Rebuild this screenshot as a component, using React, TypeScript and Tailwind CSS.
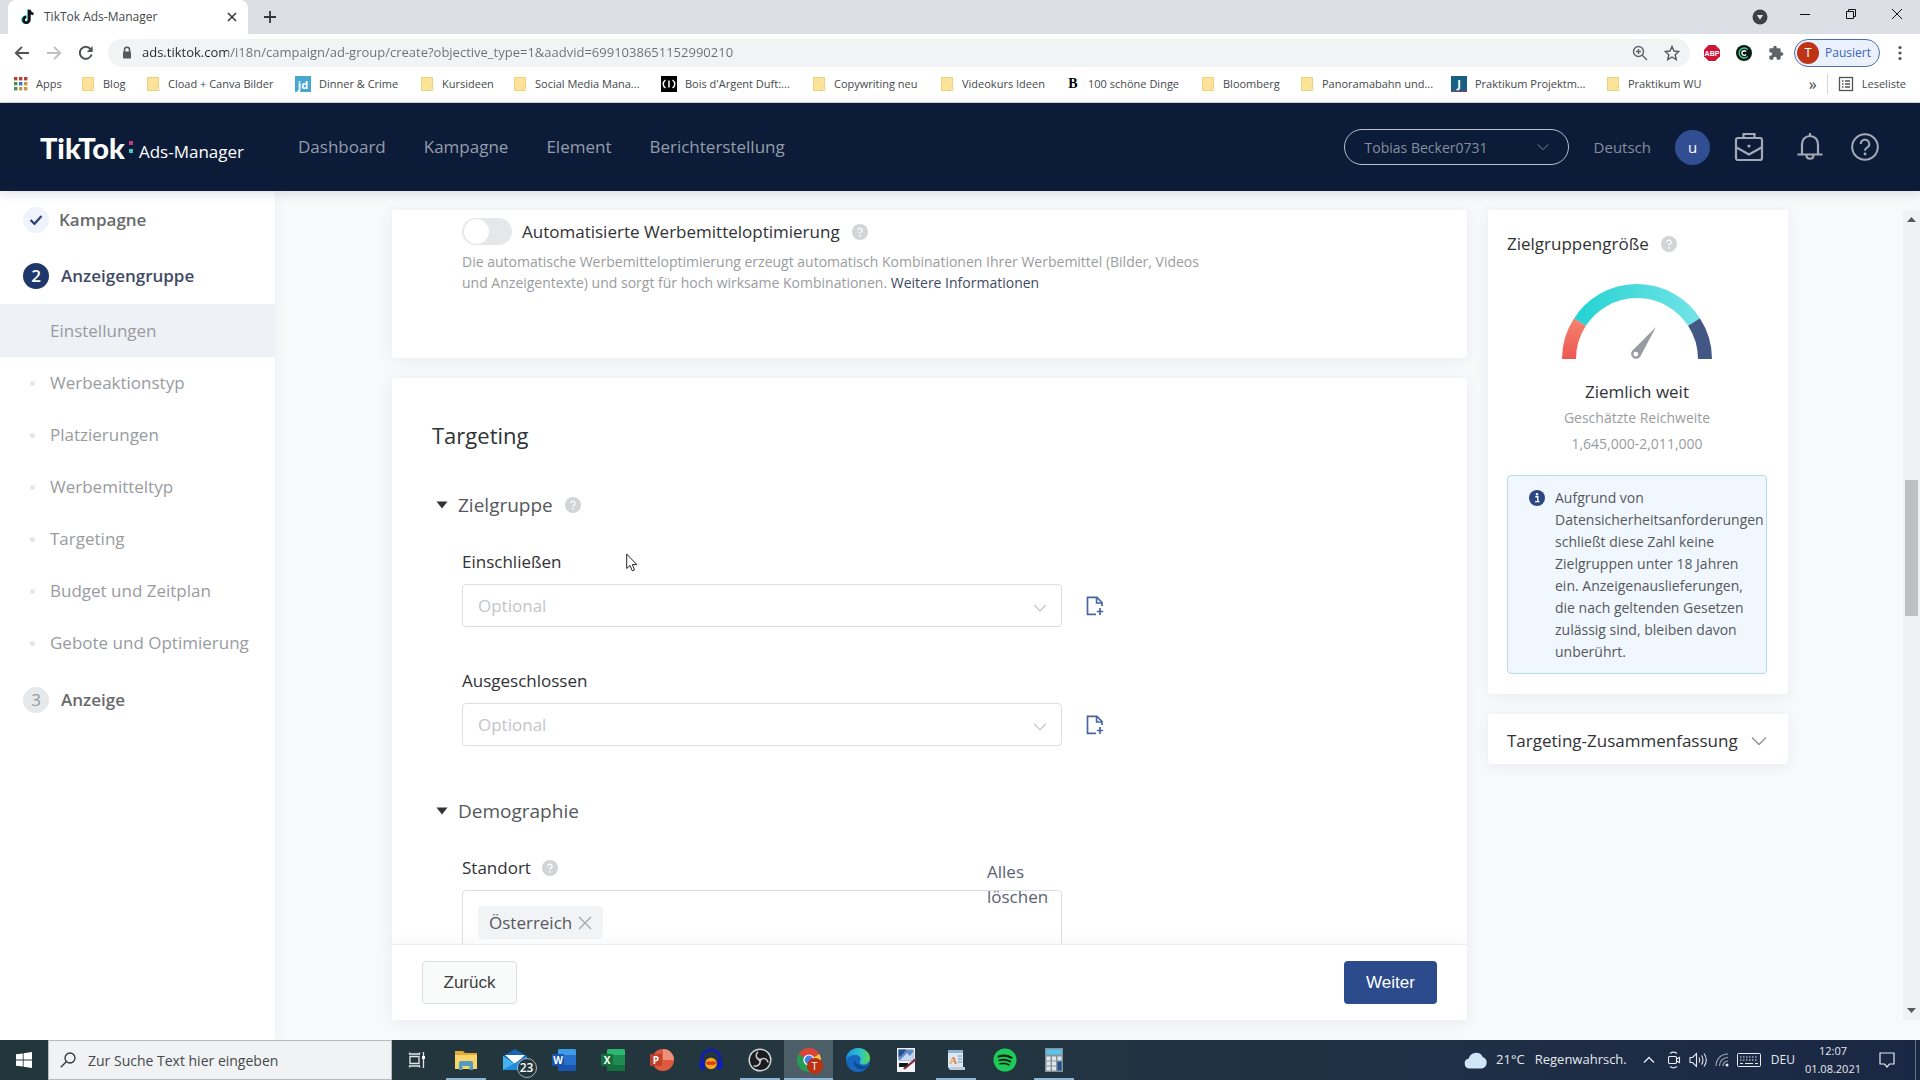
import React from 'react';
import type { ReactNode } from 'react';

/* ---------- shared icons ---------- */

function HelpDot() {
  return (
    <svg viewBox="0 0 16 16" className="size-4 shrink-0" aria-hidden="true">
      <circle cx="8" cy="8" r="8" fill="#d3d4d6" />
      <path d="M5.9 6.3a2.1 2.1 0 1 1 3 1.9c-.6.3-.9.7-.9 1.4" fill="none" stroke="#fff" strokeWidth="1.3" />
      <circle cx="8" cy="11.9" r=".9" fill="#fff" />
    </svg>
  );
}

function Chevron({ className }: { className: string }) {
  return (
    <svg viewBox="0 0 16 10" className={className} fill="none" stroke="currentColor" strokeWidth="1.3" aria-hidden="true">
      <path d="M1 1.5l7 7 7-7" />
    </svg>
  );
}

function FileAdd() {
  return (
    <svg viewBox="0 0 18 20" className="h-5 w-[18px]" fill="none" stroke="#4a65a3" strokeWidth="1.7" aria-hidden="true">
      <path d="M16 10V6.5L11 1.3H1.5v17H10" />
      <path d="M10.6 1.5V7H16" />
      <path d="M14 12v7M10.8 15.5h6.4" />
    </svg>
  );
}

/* ---------- browser chrome ---------- */

function Folder() {
  return (
    <svg viewBox="0 0 14 14" className="size-3.5" aria-hidden="true">
      <path d="M1.5.5h11v13h-11z" fill="#fbe49a" stroke="#ecd27c" />
      <path d="M10.5 10h2.5v3.5h-3z" fill="#fdf0bd" stroke="#e4c766" strokeWidth=".6" />
    </svg>
  );
}

function AppsGrid() {
  const colors = ['#b3403a', '#b3403a', '#b3403a', '#4a8f5a', '#3b72c4', '#c79a3c', '#4a8f5a', '#c79a3c', '#c79a3c'];
  return (
    <svg viewBox="0 0 14 14" className="size-3.5" aria-hidden="true">
      {colors.map((c, i) => (
        <rect key={i} x={(i % 3) * 5} y={Math.floor(i / 3) * 5} width="3.4" height="3.4" fill={c} />
      ))}
    </svg>
  );
}

const bookmarks: { label: string; cell: string; icon: ReactNode }[] = [
  { label: 'Apps', cell: 'w-[67px]', icon: <AppsGrid /> },
  { label: 'Blog', cell: 'w-[65px]', icon: <Folder /> },
  { label: 'Cload + Canva Bilder', cell: 'w-[149px]', icon: <Folder /> },
  {
    label: 'Dinner & Crime',
    cell: 'w-[125px]',
    icon: <span className="flex size-4 items-center justify-center bg-[#46a7cf] text-[11px] leading-none font-bold text-white">jd</span>,
  },
  { label: 'Kursideen', cell: 'w-[93px]', icon: <Folder /> },
  { label: 'Social Media Mana...', cell: 'w-[148px]', icon: <Folder /> },
  {
    label: "Bois d'Argent Duft:...",
    cell: 'w-[151px]',
    icon: (
      <svg viewBox="0 0 16 16" className="size-4" aria-hidden="true">
        <rect width="16" height="16" fill="#000" />
        <path d="M4.5 4C1.5 6 1.5 10 4.500 12M11.500 4c3 2 3 6 0 8" fill="none" stroke="#fff" strokeWidth="1.500" />
        <path d="M8 4.500v7" stroke="#fff" strokeWidth="1.500" />
      </svg>
    ),
  },
  { label: 'Copywriting neu', cell: 'w-[128px]', icon: <Folder /> },
  { label: 'Videokurs Ideen', cell: 'w-[126px]', icon: <Folder /> },
  {
    label: '100 schöne Dinge',
    cell: 'w-[135px]',
    icon: <span className="w-3.5 text-center font-['Liberation_Serif',serif] text-[14px] leading-none font-black text-black">B</span>,
  },
  { label: 'Bloomberg', cell: 'w-[99px]', icon: <Folder /> },
  { label: 'Panoramabahn und...', cell: 'w-[151px]', icon: <Folder /> },
  {
    label: 'Praktikum Projektm...',
    cell: 'w-[155px]',
    icon: <span className="flex size-4 items-center justify-center border-b-2 border-[#5a4a86] bg-[#17607f] text-[11px] leading-none font-bold text-white">J</span>,
  },
  { label: 'Praktikum WU', cell: 'w-[120px]', icon: <Folder /> },
];

function BrowserChrome() {
  return (
    <div className="shrink-0 bg-white text-[#45484c]">
      {/* tab strip */}
      <div className="flex h-[34px] items-start bg-[#dcdfe6]">
        <div className="ml-2 flex h-[34px] w-60 items-center rounded-t-lg bg-white pr-2 pl-3">
          <svg viewBox="0 0 16 18" className="mr-2 h-[18px] w-4" aria-hidden="true">
            <path d="M8.300 1.500v10.300a2.900 2.900 0 1 1-2.900-2.900" fill="none" stroke="#2fd8d8" strokeWidth="2.600" />
            <path d="M9.300 1.800v10a2.900 2.900 0 1 1-2.900-2.900M9.300 1.800c.3 2.500 2 3.900 4.200 4" fill="none" stroke="#111" strokeWidth="2.800" />
          </svg>
          <span className="flex-1 text-[12px]">TikTok Ads-Manager</span>
          <button aria-label="Tab schließen" className="flex size-4 items-center justify-center">
            <svg viewBox="0 0 10 10" className="size-2.5" stroke="#33363a" strokeWidth="1.500" aria-hidden="true"><path d="M1 1l8 8M9 1L1 9" /></svg>
          </button>
        </div>
        <button aria-label="Neuer Tab" className="ml-3.5 flex h-[34px] w-4 items-center justify-center">
          <svg viewBox="0 0 14 14" className="size-3.5" stroke="#33363a" strokeWidth="1.800" aria-hidden="true"><path d="M7 1v12M1 7h12" /></svg>
        </button>
        <div className="flex-1" />
        <button aria-label="Tabs durchsuchen" className="mr-3.5 flex h-[34px] w-4 items-center justify-center">
          <svg viewBox="0 0 16 16" className="size-4" aria-hidden="true"><circle cx="8" cy="8" r="7.500" fill="#3d4044" /><path d="M4.800 6h6.400L8 10.800z" fill="#dcdfe6" /></svg>
        </button>
        <button aria-label="Minimieren" className="flex h-7 w-[46px] items-center justify-center">
          <svg viewBox="0 0 12 12" className="size-3" stroke="#111" aria-hidden="true"><path d="M1 6.500h10" /></svg>
        </button>
        <button aria-label="Verkleinern" className="flex h-7 w-[46px] items-center justify-center">
          <svg viewBox="0 0 12 12" className="size-3" fill="none" stroke="#111" aria-hidden="true"><path d="M1.500 3.500h7v7h-7zM3.500 3.500v-2h7v7h-2" /></svg>
        </button>
        <button aria-label="Schließen" className="flex h-7 w-[46px] items-center justify-center">
          <svg viewBox="0 0 12 12" className="size-3" stroke="#111" aria-hidden="true"><path d="M1 1l10 10M11 1L1 11" /></svg>
        </button>
      </div>

      {/* address row */}
      <div className="flex h-[34px] items-center pt-1">
        <div className="flex w-[108px] items-center gap-4 pl-3.5">
          <button aria-label="Zurück">
            <svg viewBox="0 0 16 16" className="size-4" fill="none" stroke="#505356" strokeWidth="1.900" aria-hidden="true"><path d="M15 8H2M8 1.800L1.800 8 8 14.200" /></svg>
          </button>
          <button aria-label="Vorwärts">
            <svg viewBox="0 0 16 16" className="size-4" fill="none" stroke="#bfc1c4" strokeWidth="1.900" aria-hidden="true"><path d="M1 8h13M8 1.800L14.200 8 8 14.200" /></svg>
          </button>
          <button aria-label="Neu laden">
            <svg viewBox="0 0 16 16" className="size-4" fill="none" stroke="#505356" strokeWidth="2" aria-hidden="true"><path d="M13.600 9.500A6 6 0 1 1 12.500 4" /><path d="M14.700 1v6H8.800z" fill="#505356" stroke="none" /></svg>
          </button>
        </div>
        <div className="flex h-7 flex-1 items-center rounded-full bg-[#f1f3f4] pr-2.5 pl-3.5">
          <svg viewBox="0 0 10 14" className="h-3.5 w-2.5" aria-hidden="true"><path d="M2.500 6V3.700a2.500 2.500 0 0 1 5 0V6" fill="none" stroke="#55585c" strokeWidth="1.500" /><rect x="1" y="5.500" width="8" height="7" rx=".8" fill="#55585c" /></svg>
          <input
            aria-label="Adresse"
            readOnly
            value="ads.tiktok.com/i18n/campaign/ad-group/create?objective_type=1&aadvid=6991038651152990210"
            className="ml-2.5 min-w-0 flex-1 bg-[linear-gradient(90deg,#25282c_86px,#6b6f74_86px)] bg-clip-text text-[13px] text-transparent outline-none"
          />
          <button aria-label="Zoom" className="mr-4">
            <svg viewBox="0 0 16 16" className="size-4" fill="none" stroke="#5f6368" strokeWidth="1.400" aria-hidden="true"><circle cx="6.500" cy="6.500" r="5" /><path d="M10.300 10.300l4.700 4.700M6.500 4v5M4 6.500h5" /></svg>
          </button>
          <button aria-label="Lesezeichen">
            <svg viewBox="0 0 16 16" className="size-4" fill="none" stroke="#55585c" strokeWidth="1.400" aria-hidden="true"><path d="M8 1.500l2 4.500 4.800.5-3.600 3.200 1 4.800L8 12l-4.200 2.500 1-4.800L1.200 6.500 6 6z" /></svg>
          </button>
        </div>
        <div className="flex items-center gap-4 pl-3.5">
          <svg viewBox="0 0 16 16" className="size-4" role="img" aria-label="ABP">
            <path d="M4.700 0h6.600L16 4.700v6.600L11.300 16H4.700L0 11.300V4.700z" fill="#cf1438" />
            <text x="8" y="10.700" textAnchor="middle" fontSize="7" fontWeight="700" fill="#fff" fontFamily="Liberation Sans, sans-serif">ABP</text>
          </svg>
          <svg viewBox="0 0 16 16" className="size-4" aria-hidden="true"><circle cx="8" cy="8" r="8" fill="#0b1a14" /><path d="M11.800 4.600a5 5 0 1 0 0 6.800" fill="none" stroke="#3ed896" strokeWidth="1.300" /><path d="M10 6.600a2.300 2.300 0 1 0 0 2.900" fill="none" stroke="#fff" strokeWidth="1.400" /></svg>
          <svg viewBox="0 0 24 24" className="size-4" fill="#5f6368" aria-hidden="true"><path d="M20.500 11H19V7a2 2 0 0 0-2-2h-4V3.500a2.500 2.500 0 0 0-5 0V5H4a2 2 0 0 0-2 2v3.800h1.500a2.700 2.700 0 0 1 0 5.400H2V20a2 2 0 0 0 2 2h3.800v-1.500a2.700 2.700 0 0 1 5.400 0V22H17a2 2 0 0 0 2-2v-4h1.500a2.500 2.500 0 0 0 0-5z" /></svg>
        </div>
        <button className="ml-2.5 flex h-7 items-center gap-1.5 rounded-full border border-[#4a6fae] bg-[#eaf1fd] pr-2 pl-0.5 text-[12px] text-[#3d62b8]">
          <span className="flex size-[22px] items-center justify-center rounded-full bg-[#bd3516] text-[13px] text-white">T</span>
          Pausiert
        </button>
        <button aria-label="Menü" className="flex w-10 justify-center">
          <svg viewBox="0 0 4 16" className="h-4 w-1" fill="#505356" aria-hidden="true"><circle cx="2" cy="2.500" r="1.600" /><circle cx="2" cy="8" r="1.600" /><circle cx="2" cy="13.500" r="1.600" /></svg>
        </button>
      </div>

      {/* bookmarks */}
      <div className="flex h-[35px] items-center border-b border-[#d8dade] pb-0.5 pl-3.5 text-[11px]">
        {bookmarks.map((b) => (
          <a key={b.label} href="#" className={`flex shrink-0 items-center gap-2 whitespace-nowrap ${b.cell}`}>
            {b.icon}
            {b.label}
          </a>
        ))}
        <div className="flex-1" />
        <button aria-label="Weitere Lesezeichen" className="text-[16px] leading-none">»</button>
        <div className="ml-2.5 h-5 w-px bg-[#d4d6d9]" />
        <button className="mr-3.5 ml-2.5 flex items-center gap-2">
          <svg viewBox="0 0 16 16" className="size-4" fill="none" stroke="#505356" strokeWidth="1.300" aria-hidden="true"><rect x="1.500" y="1.500" width="13" height="13" /><path d="M4 5h1.500M7 5h5M4 8h1.500M7 8h5M4 11h1.500M7 11h5" /></svg>
          Leseliste
        </button>
      </div>
    </div>
  );
}

/* ---------- app header ---------- */

function AppHeader() {
  return (
    <header className="relative z-10 flex h-[88px] shrink-0 items-center bg-[#0c1c38] px-10 text-[#949cab] shadow-[0_2px_10px_rgba(40,50,100,0.16)]">
      <a href="#" className="flex w-[258px] items-center text-white">
        <span className="font-['Lato',sans-serif] text-[29px] leading-none font-black">TikTok</span>
        <span className="mr-1.5 ml-1 flex flex-col gap-1">
          <span className="size-1 bg-[#c23a7c]" />
          <span className="size-1 bg-[#3fc7c9]" />
        </span>
        <span className="pt-2 text-[17px] leading-none">Ads-Manager</span>
      </a>
      <nav className="flex gap-[38px] text-[17px] font-medium">
        <a href="#">Dashboard</a>
        <a href="#">Kampagne</a>
        <a href="#">Element</a>
        <a href="#">Berichterstellung</a>
      </nav>
      <div className="flex-1" />
      <button className="flex h-9 w-[225px] items-center justify-between rounded-full border border-[#b9c0cc] pr-[19px] pl-5 text-[14px] text-[#858e9e]">
        Tobias Becker0731
        <Chevron className="h-2 w-3" />
      </button>
      <button className="ml-[25px] text-[15px] text-[#858e9e]">Deutsch</button>
      <button className="ml-6 flex size-[35px] items-center justify-center rounded-full bg-[#324e92] text-[15px] text-white">u</button>
      <button aria-label="Business" className="ml-6">
        <svg viewBox="0 0 30 30" className="size-[30px]" fill="none" stroke="#a3a9b5" strokeWidth="2.200" aria-hidden="true">
          <rect x="2" y="6" width="26" height="22" rx="2" />
          <path d="M9.500 6V2h11v4M2.500 15.500L15 22.500l12.500-7" />
          <circle cx="15" cy="14" r="1.600" fill="#a3a9b5" stroke="none" />
        </svg>
      </button>
      <button aria-label="Benachrichtigungen" className="ml-8">
        <svg viewBox="0 0 28 30" className="h-[30px] w-7" fill="none" stroke="#a3a9b5" strokeWidth="2.200" aria-hidden="true">
          <path d="M6 22.500V12a8 8 0 0 1 16 0v10.500M1.500 22.500h25M14 1v3M10.500 23c0 5 7 5 7 0" />
        </svg>
      </button>
      <button aria-label="Hilfe" className="ml-[26px]">
        <svg viewBox="0 0 30 30" className="size-[30px]" fill="none" stroke="#a3a9b5" strokeWidth="2" aria-hidden="true">
          <circle cx="15" cy="15" r="12.800" />
          <path d="M10.800 12a4.200 4.200 0 1 1 6.200 3.600c-1.400.8-2 1.600-2 3.200" />
          <circle cx="15" cy="22" r="1.400" fill="#a3a9b5" stroke="none" />
        </svg>
      </button>
    </header>
  );
}

/* ---------- sidebar ---------- */

const steps = ['Werbeaktionstyp', 'Platzierungen', 'Werbemitteltyp', 'Targeting', 'Budget und Zeitplan', 'Gebote und Optimierung'];

function Sidebar() {
  return (
    <nav className="w-[275px] shrink-0 bg-white pt-px text-[17px] text-[#999b9f] shadow-[0_0_12px_rgba(60,70,100,0.06)]">
      <a href="#" className="flex h-14 items-center gap-2.5 pl-[23px] font-semibold text-[#68696d]">
        <span className="flex size-[26px] items-center justify-center rounded-full bg-[#eff3fb]">
          <svg viewBox="0 0 14 12" className="h-3 w-3.5" fill="none" stroke="#2f4173" strokeWidth="2.200" aria-hidden="true"><path d="M1.500 6l4 3.800L12.500 2" /></svg>
        </span>
        Kampagne
      </a>
      <a href="#" className="flex h-14 items-center gap-3 pl-[23px] font-semibold text-[#3f4a66]">
        <span className="flex size-[26px] items-center justify-center rounded-full bg-[#20376c] text-white">2</span>
        Anzeigengruppe
      </a>
      <a href="#" className="flex h-[53px] items-center bg-[#eef1f6] pl-[50px]">Einstellungen</a>
      <div>
        {steps.map((s) => (
          <a key={s} href="#" className="flex h-[52px] items-center gap-[15px] pl-[30px]">
            <span className="size-[5px] rounded-full bg-[#e4e6e9]" />
            {s}
          </a>
        ))}
      </div>
      <a href="#" className="flex h-[62px] items-center gap-3 pl-[23px] font-semibold text-[#68696d]">
        <span className="flex size-[26px] items-center justify-center rounded-full bg-[#e6e8ea] font-medium text-[#94989e]">3</span>
        Anzeige
      </a>
    </nav>
  );
}

/* ---------- main column ---------- */

function SectionTitle({ children, help }: { children: string; help?: boolean }) {
  return (
    <h3 className="flex items-center text-[19px] leading-7 text-[#55585c]">
      <svg viewBox="0 0 12 8" className="mr-2.5 h-2 w-3" fill="#303236" aria-hidden="true"><path d="M.5.500h11L6 7.500z" /></svg>
      <span className="mr-3">{children}</span>
      {help && <HelpDot />}
    </h3>
  );
}

function AudienceField({ id, label }: { id: string; label: string }) {
  return (
    <div>
      <label htmlFor={id} className="block text-[17px] leading-6 font-medium text-[#303236]">{label}</label>
      <div className="mt-2.5 flex items-center gap-6">
        <div className="relative w-[600px]">
          <select id={id} defaultValue="" className="block h-[43px] w-full appearance-none rounded border border-[#dcdee1] bg-white px-[15px] text-[17px] text-[#c3c5c8] outline-none">
            <option value="">Optional</option>
          </select>
          <Chevron className="pointer-events-none absolute top-5 right-[15px] h-2 w-3.5 text-[#b4b6ba]" />
        </div>
        <button aria-label={`${label}: Zielgruppe erstellen`}><FileAdd /></button>
      </div>
    </div>
  );
}

const cardShadow = 'shadow-[0_2px_14px_rgba(60,70,100,0.08)]';

function MainColumn() {
  return (
    <main className="flex min-w-0 flex-1 flex-col pt-[19px] pb-5">
      <section className={`rounded-b bg-white px-[70px] pt-2 pb-[65px] ${cardShadow}`}>
        <div className="flex items-center">
          <input
            id="auto-optimierung"
            type="checkbox"
            role="switch"
            className="relative h-[27px] w-[50px] appearance-none rounded-full bg-[#e6e7e9] before:absolute before:top-px before:left-0.5 before:size-[25px] before:rounded-full before:bg-white"
          />
          <label htmlFor="auto-optimierung" className="ml-2.5 text-[17px] leading-[26px] font-medium text-[#303236]">Automatisierte Werbemitteloptimierung</label>
          <span className="ml-3"><HelpDot /></span>
        </div>
        <p className="mt-1.5 w-[760px] text-[14px] leading-[21px] text-[#9a9ca0]">
          Die automatische Werbemitteloptimierung erzeugt automatisch Kombinationen Ihrer Werbemittel (Bilder, Videos und Anzeigentexte) und sorgt für hoch wirksame Kombinationen.{' '}
          <a href="#" className="text-[#3e4a63]">Weitere Informationen</a>
        </p>
      </section>

      <section className={`mt-5 min-h-0 flex-1 overflow-hidden rounded-t bg-white px-10 pt-10 ${cardShadow}`}>
        <h2 className="text-[22px] leading-[34px] font-medium text-[#303236]">Targeting</h2>
        <div className="mt-[39px] pl-1">
          <SectionTitle help>Zielgruppe</SectionTitle>
        </div>
        <div className="mt-[31px] flex flex-col gap-[42px] pl-[30px]">
          <AudienceField id="einschliessen" label="Einschließen" />
          <AudienceField id="ausgeschlossen" label="Ausgeschlossen" />
        </div>
        <div className="mt-[51px] pl-1">
          <SectionTitle>Demographie</SectionTitle>
        </div>
        <div className="mt-[31px] pl-[30px]">
          <div className="flex items-center gap-[11px]">
            <label htmlFor="standort" className="text-[17px] leading-6 font-medium text-[#303236]">Standort</label>
            <HelpDot />
          </div>
          <div className="relative mt-2.5 flex h-24 w-[600px] items-start rounded border border-[#dcdee1] px-[15px] pt-[15px]">
            <span className="flex h-[33px] items-center gap-1.5 rounded bg-[#f2f3f5] px-[11px] text-[17px] text-[#55585c]">
              Österreich
              <button aria-label="Österreich entfernen">
                <svg viewBox="0 0 14 14" className="size-3.5" stroke="#a3a6aa" strokeWidth="1.300" aria-hidden="true"><path d="M1 1l12 12M13 1L1 13" /></svg>
              </button>
            </span>
            <input id="standort" className="h-8 min-w-0 flex-1 outline-none" />
            <button className="absolute -top-8 right-2.5 w-16 text-left text-[17px] leading-[25px] text-[#5a5f72]">Alles löschen</button>
          </div>
        </div>
      </section>

      <footer className={`flex shrink-0 items-center justify-between border-t border-[#eeeff1] bg-white py-4 pr-[30px] pl-[30px] font-['Liberation_Sans',Arial,sans-serif] text-[17px] ${cardShadow}`}>
        <button className="h-[43px] w-[95px] rounded border border-[#dcdee1] bg-[#f9fafa] text-[#3d3f43]">Zurück</button>
        <button className="h-[43px] w-[93px] rounded bg-[#2b4b8c] text-white">Weiter</button>
      </footer>
    </main>
  );
}

/* ---------- right column ---------- */

function Gauge() {
  return (
    <svg viewBox="0 0 150 75" className="h-[75px] w-[150px]" fill="none" aria-hidden="true">
      <defs>
        <linearGradient id="reach-red" x1="0" y1="1" x2="0" y2="0"><stop offset="0" stopColor="#ec5853" /><stop offset="1" stopColor="#f57f6b" /></linearGradient>
        <linearGradient id="reach-teal"><stop offset="0" stopColor="#27d3d3" /><stop offset="1" stopColor="#70e3e6" /></linearGradient>
      </defs>
      <path d="M7 75A68 68 0 0 1 18 38" stroke="url(#reach-red)" strokeWidth="14" />
      <path d="M18 38A68 68 0 0 1 132 38" stroke="url(#reach-teal)" strokeWidth="14" />
      <path d="M132 38A68 68 0 0 1 143 75" stroke="#435785" strokeWidth="14" />
      <path d="M94 43L78.300 72.600A5 5 0 1 1 70 67z" fill="#999ba3" />
      <circle cx="73.800" cy="70.200" r="2.400" fill="#fff" />
    </svg>
  );
}

function Summary() {
  return (
    <aside className="w-[300px] shrink-0 pt-[19px]">
      <section className={`rounded-b bg-white pt-[21px] pr-[21px] pb-5 pl-[19px] ${cardShadow}`}>
        <h3 className="flex items-center gap-3 text-[17px] leading-[26px] font-medium text-[#303236]">
          Zielgruppengröße <HelpDot />
        </h3>
        <div className="mt-[27px] flex flex-col items-center">
          <Gauge />
          <p className="mt-5 text-[17px] leading-[26px] font-medium text-[#303236]">Ziemlich weit</p>
          <p className="text-[14px] leading-[26px] text-[#9a9ca0]">Geschätzte Reichweite</p>
          <p className="text-[14px] leading-[26px] text-[#9a9ca0]">1,645,000-2,011,000</p>
        </div>
        <div className="mt-[18px] flex gap-2.5 rounded border border-[#b5dbe8] bg-[#f1f7fe] pt-[11px] pb-2.5 pl-[21px]">
          <svg viewBox="0 0 16 16" className="mt-[3px] size-4 shrink-0" aria-hidden="true"><circle cx="8" cy="8" r="8" fill="#2c4681" /><path d="M6.300 6.800h2.500v4.700M6 11.600h4.500" fill="none" stroke="#fff" strokeWidth="1.400" /><circle cx="8" cy="4.200" r="1.200" fill="#fff" /></svg>
          <p className="w-[209px] shrink-0 text-[14px] leading-[22px] text-[#55585c]">
            Aufgrund von Datensicherheitsanforderungen schließt diese Zahl keine Zielgruppen unter 18 Jahren ein. Anzeigenauslieferungen, die nach geltenden Gesetzen zulässig sind, bleiben davon unberührt.
          </p>
        </div>
      </section>
      <button className={`mt-5 flex h-[50px] w-full items-center justify-between rounded-b bg-white pr-[21px] pl-[19px] text-[17px] font-medium text-[#303236] ${cardShadow}`}>
        <span className="pt-1">Targeting-Zusammenfassung</span>
        <Chevron className="mt-1 h-2.5 w-4 text-[#8f9196]" />
      </button>
    </aside>
  );
}

function Scrollbar() {
  return (
    <div className="mt-[19px] mb-5 flex w-[17px] shrink-0 flex-col items-center justify-between bg-[#f0f1f2] py-[7px]">
      <svg viewBox="0 0 9 5" className="h-[5px] w-[9px]" fill="#55585c" aria-hidden="true"><path d="M0 5L4.500 0 9 5z" /></svg>
      <div className="flex w-full flex-1 flex-col items-center">
        <div className="grow-[257]" />
        <div className="w-[13px] grow-[135] bg-[#bfc0c2]" />
        <div className="grow-[391]" />
      </div>
      <svg viewBox="0 0 9 5" className="h-[5px] w-[9px]" fill="#55585c" aria-hidden="true"><path d="M0 0l4.500 5L9 0z" /></svg>
    </div>
  );
}

/* ---------- taskbar ---------- */

function OfficeTile({ letter, light, mid, dark, round }: { letter: string; light: string; mid: string; dark: string; round?: boolean }) {
  return (
    <svg viewBox="0 0 24 24" className="size-6" aria-hidden="true">
      {round ? (
        <>
          <circle cx="13" cy="12" r="11" fill={mid} />
          <path d="M13 1a11 11 0 0 1 11 11H13z" fill={light} />
        </>
      ) : (
        <>
          <rect x="6" y="1" width="18" height="22" rx="1.500" fill={mid} />
          <path d="M6 7V2.500A1.500 1.500 0 0 1 7.500 1h15A1.500 1.500 0 0 1 24 2.500V7z" fill={light} />
          <path d="M6 17h18v4.500a1.500 1.500 0 0 1-1.500 1.500h-15A1.500 1.500 0 0 1 6 21.500z" fill={dark} />
        </>
      )}
      <rect y="6" width="12" height="12" rx="1" fill={dark} />
      <text x="6" y="15.500" textAnchor="middle" fontSize="10" fontWeight="700" fill="#fff" fontFamily="Open Sans, sans-serif">{letter}</text>
    </svg>
  );
}

const apps: { name: string; open?: boolean; active?: boolean; icon: ReactNode }[] = [
  {
    name: 'Aktive Anwendungen',
    icon: (
      <svg viewBox="0 0 18 18" className="size-[18px]" fill="none" stroke="#e3e7ea" strokeWidth="1.300" aria-hidden="true">
        <path d="M2 5.500h9v7H2zM1.500 1.500V3h10V1.500M1.500 16.500V15h10v1.500M15.500 1v16" />
        <path d="M14 5h3v3h-3z" fill="#fff" stroke="none" />
      </svg>
    ),
  },
  {
    name: 'Explorer',
    open: true,
    icon: (
      <svg viewBox="0 0 24 22" className="h-[22px] w-6" aria-hidden="true">
        <path d="M1 2h8l2 2h12v16H1z" fill="#e5a83b" />
        <path d="M1 6h22v14H1z" fill="#f8d46b" />
        <path d="M5 21v-7a2 2 0 0 1 2-2h10a2 2 0 0 1 2 2v7h-3.500v-4h-7v4z" fill="#4f9bc4" />
      </svg>
    ),
  },
  {
    name: 'Mail',
    icon: (
      <span className="relative">
        <svg viewBox="0 0 24 24" className="size-6" aria-hidden="true">
          <path d="M0 8l12-7 12 7v14H0z" fill="#1666b5" />
          <path d="M2 7h20l-10 9z" fill="#fff" />
          <path d="M0 8l12 8-12 6z" fill="#45b4ee" />
          <path d="M0 22L24 8v14z" fill="#1f8cdc" />
        </svg>
        <span className="absolute top-2.5 left-3.5 flex size-5 items-center justify-center rounded-full border border-[#a7b3ba] bg-[#25373e] text-[12px] font-semibold text-white">23</span>
      </span>
    ),
  },
  { name: 'Word', icon: <OfficeTile letter="W" light="#3f9be6" mid="#2670ce" dark="#1a56b0" /> },
  { name: 'Excel', icon: <OfficeTile letter="X" light="#2cb673" mid="#1c8c52" dark="#14713f" /> },
  { name: 'PowerPoint', icon: <OfficeTile letter="P" light="#f0907a" mid="#dc5b40" dark="#c0412a" round /> },
  {
    name: 'Audacity',
    icon: (
      <svg viewBox="0 0 24 24" className="size-6" aria-hidden="true">
        <circle cx="12" cy="15.500" r="5.800" fill="#f4a623" />
        <path d="M6.500 15q2.700-3 5.500-1.200Q14.800 12 17.500 15q-2.700 3-5.500 1.500Q9.200 18 6.500 15z" fill="#dd3b1c" />
        <path d="M3 15C2 4.500 7 2 12 2s10 2.500 9 13" fill="none" stroke="#0e1dbd" strokeWidth="2.600" />
        <path d="M5.500 12v10C2.500 22 0 20 0 17s2.500-5 5.500-5zM18.500 12v10c3 0 5.500-2 5.500-5s-2.500-5-5.500-5z" fill="#0e1dbd" />
      </svg>
    ),
  },
  {
    name: 'OBS',
    open: true,
    icon: (
      <svg viewBox="0 0 24 24" className="size-6" fill="none" aria-hidden="true">
        <circle cx="12" cy="12" r="10.800" fill="#1c1c20" stroke="#d5d7d9" strokeWidth="1.400" />
        <path d="M12 12C8 11 7 6.500 10 3.800M12 12c3-3 7.500-1.500 8 2.500M12 12c1 4-2.500 7.200-6.300 5.800" stroke="#c9cbcd" strokeWidth="1.500" />
        <circle cx="12" cy="12" r="1.600" fill="#c9cbcd" />
      </svg>
    ),
  },
  {
    name: 'Chrome',
    open: true,
    active: true,
    icon: (
      <span className="relative">
        <svg viewBox="0 0 24 24" className="size-6" aria-hidden="true">
          <path d="M12 12L1.600 6A12 12 0 0 1 22.400 6z" fill="#dc4437" />
          <path d="M12 12H24A12 12 0 0 1 12 24z" fill="#f6c644" />
          <path d="M12 12l10.400-6A12 12 0 0 1 24 12z" fill="#f6c644" />
          <path d="M12 12v12A12 12 0 0 1 1.600 6z" fill="#279a55" />
          <circle cx="12" cy="12" r="5.600" fill="#fff" />
          <circle cx="12" cy="12" r="4.400" fill="#4482ec" />
        </svg>
        <span className="absolute top-2.5 left-2.5 flex size-4 items-center justify-center rounded-full bg-[#bd3012] text-[11px] text-white">T</span>
      </span>
    ),
  },
  {
    name: 'Edge',
    icon: (
      <svg viewBox="0 0 24 24" className="size-6" aria-hidden="true">
        <defs><linearGradient id="edge-wave"><stop offset="0" stopColor="#1f8fe0" /><stop offset=".6" stopColor="#2fc4c8" /><stop offset="1" stopColor="#60d64e" /></linearGradient></defs>
        <circle cx="12" cy="12" r="12" fill="#1667c0" />
        <path d="M0 12C0 5 5.500 0 12 0s12 4.500 12 10c0 4-3 6.500-6.500 6.500-3 0-4.500-1.500-3.500-3 2-3.500-.5-6.500-4-6.500C5 7 1 9 0 12z" fill="url(#edge-wave)" />
        <path d="M8.500 12c-2 4 1 9.500 7.500 9 3 0 5-1.500 6.500-4-2 1.500-5 2-8 .5C11 16 9 14.500 8.500 12z" fill="#114a8c" />
      </svg>
    ),
  },
  {
    name: 'Bildbearbeitung',
    icon: (
      <svg viewBox="0 0 20 24" className="h-6 w-5" aria-hidden="true">
        <rect width="18" height="24" fill="#f1f3f6" />
        <path d="M1.500 1.500h15v11h-15z" fill="#5f8ac8" />
        <path d="M1.500 1.500h8L5 7 1.500 9z" fill="#27508f" />
        <path d="M3 12l7-7 3 3 3-4v8z" fill="#c4d8f1" />
        <path d="M2 15h9v4H2z" fill="#14181f" />
        <path d="M6 20.500L18.500 10l1.500 1.500L8 21.500z" fill="#7c2733" />
      </svg>
    ),
  },
  {
    name: 'WordPad',
    open: true,
    icon: (
      <svg viewBox="0 0 18 22" className="h-[22px] w-[18px]" aria-hidden="true">
        <path d="M1 1h15v17l2 3H3l-2-3z" fill="#dde6ee" />
        <path d="M1 1h15v3H1z" fill="#8cb6d6" />
        <text x="6.500" y="14.500" textAnchor="middle" fontSize="11" fontWeight="700" fill="#e3873a" fontFamily="Liberation Serif, serif">A</text>
        <path d="M11 7h4M11 10h4M11 13h4" stroke="#6f93b5" />
        <path d="M3 18h15v3H3z" fill="#b9cbd9" />
      </svg>
    ),
  },
  {
    name: 'Spotify',
    icon: (
      <svg viewBox="0 0 24 24" className="size-6" fill="none" stroke="#152318" strokeLinecap="round" aria-hidden="true">
        <circle cx="12" cy="12" r="11.500" fill="#1ecb58" stroke="none" />
        <path d="M5.500 8.500c4.500-1.300 9.500-.8 13 1.200" strokeWidth="2.200" />
        <path d="M6.300 12.300c4-1 7.800-.6 11 1.200" strokeWidth="1.900" />
        <path d="M7 15.800c3.300-.8 6.300-.5 9 1" strokeWidth="1.600" />
      </svg>
    ),
  },
  {
    name: 'Rechner',
    open: true,
    icon: (
      <svg viewBox="0 0 18 24" className="h-6 w-[18px]" aria-hidden="true">
        <rect width="18" height="24" fill="#84929c" />
        <rect x="1.500" y="1.500" width="15" height="5" fill="#58c6e8" />
        <path d="M1.500 8.500h4v4h-4zM7 8.500h4v4H7zM12.500 8.500h4v4h-4zM1.500 13.500h4v4h-4zM7 13.500h4v4H7zM1.500 18.500h4v4h-4zM7 18.500h4v4H7z" fill="#e3e7ea" />
        <path d="M12.500 13.500h4v9h-4z" fill="#1e4f8d" />
      </svg>
    ),
  },
];

function Taskbar() {
  return (
    <footer className="flex h-10 shrink-0 items-stretch bg-[linear-gradient(90deg,#22353b_0%,#24363f_45%,#1f2f45_75%,#1a2744_100%)] text-[#e6e9ee]">
      <button aria-label="Start" className="flex w-12 items-center justify-center">
        <svg viewBox="0 0 16 16" className="size-4" fill="#fff" aria-hidden="true"><path d="M0 2.300l6.800-.9v6.200H0zM7.600 1.300L16 0v7.600H7.600zM0 8.400h6.800v6.200L0 13.700zM7.600 8.400H16V16l-8.400-1.300z" /></svg>
      </button>
      <label className="flex w-[344px] items-center gap-3 border border-[#b7babd] bg-[#f1f2f3] pl-[11px]">
        <svg viewBox="0 0 16 16" className="size-4 shrink-0" fill="none" stroke="#333" strokeWidth="1.300" aria-hidden="true"><circle cx="10" cy="6" r="5" /><path d="M6.500 9.500L.8 15.200" /></svg>
        <input aria-label="Suche" placeholder="Zur Suche Text hier eingeben" className="min-w-0 flex-1 bg-transparent text-[14px] text-[#45484c] outline-none placeholder:text-[#45484c]" />
      </label>
      {apps.map((a) => (
        <button key={a.name} aria-label={a.name} className={`flex w-[49px] flex-col items-center ${a.active ? 'bg-[#4c5f66]' : ''}`}>
          <span className="flex flex-1 items-center pt-0.5">{a.icon}</span>
          <span className={`h-0.5 ${a.active ? 'w-full' : 'w-10'} ${a.open ? 'bg-[#8fb4d4]' : 'bg-transparent'}`} />
        </button>
      ))}
      <div className="flex-1" />
      <div className="flex items-center text-[13px]">
        <svg viewBox="0 0 24 18" className="h-[18px] w-6" aria-hidden="true"><path d="M5.500 17.500a5 5 0 0 1-.8-9.900 7.500 7.500 0 0 1 14-1.600 6 6 0 0 1-.7 11.500z" fill="#cfe6f7" /></svg>
        <span className="ml-2">21°C</span>
        <span className="ml-2.5">Regenwahrsch.</span>
        <svg viewBox="0 0 12 8" className="ml-4 h-2 w-3" fill="none" stroke="#e6e9ee" strokeWidth="1.300" aria-hidden="true"><path d="M1 6.500l5-5 5 5" /></svg>
        <svg viewBox="0 0 14 18" className="ml-3 h-[18px] w-3.5" fill="none" stroke="#e6e9ee" strokeWidth="1.100" aria-hidden="true"><rect x="1.500" y="5.500" width="8" height="7" rx="1" /><path d="M9.500 8l3-1.500v5l-3-1.500M3 2.500c2-1.500 5-1.500 7 0M3 15.500c2 1.500 5 1.500 7 0" /></svg>
        <svg viewBox="0 0 18 16" className="ml-2 h-4 w-[18px]" fill="none" stroke="#e6e9ee" strokeWidth="1.100" aria-hidden="true"><path d="M1 5.500h2.500l4-4v13l-4-4H1zM10 5.500c1 1.500 1 3.500 0 5M12.500 3.500c2 2.500 2 6.500 0 9M15 1.500c3 3.500 3 9.500 0 13" /></svg>
        <svg viewBox="0 0 14 14" className="ml-2 size-3.5" fill="none" stroke="#a7b0bd" strokeWidth="1.100" aria-hidden="true"><path d="M1 13C1 6 6 1 13 1M4.500 13c0-5 3.500-8.500 8.500-8.500M8 13c0-3 2-5 5-5" /><circle cx="12" cy="12" r="1.500" fill="#e6e9ee" stroke="none" /></svg>
        <svg viewBox="0 0 24 14" className="ml-2 h-3.5 w-6" fill="none" stroke="#e6e9ee" aria-hidden="true"><rect x=".5" y=".5" width="23" height="13" rx="1" /><path d="M3 4h18M3 7h18" strokeDasharray="1.500 1.500" /><path d="M3 10.500h3M8 10.500h8M18 10.500h3" /></svg>
        <span className="ml-2.5 text-[12px]">DEU</span>
        <span className="ml-2.5 flex flex-col items-center text-[11px] leading-[18px]">
          <span>12:07</span>
          <span>01.08.2021</span>
        </span>
        <svg viewBox="0 0 16 16" className="mr-5 ml-[18px] size-4" fill="none" stroke="#e6e9ee" strokeWidth="1.200" aria-hidden="true"><path d="M1 1h14v11h-4.500L8 15l-2.500-3H1z" /></svg>
        <span className="mr-1 h-10 w-px bg-[#66717f]" />
      </div>
    </footer>
  );
}

function Cursor() {
  return (
    <svg viewBox="0 0 12 19" className="pointer-events-none absolute top-[553px] left-[626px] z-20 h-[19px] w-3" aria-hidden="true">
      <path d="M.7 1v14.500l3.300-3 2.300 5.300 2.300-1-2.300-5.200h4.500z" fill="#fff" stroke="#222" />
    </svg>
  );
}

export default function App() {
  return (
    <div className="relative flex h-screen flex-col overflow-hidden bg-[#f8f9fb] font-['Open_Sans',sans-serif]">
      <BrowserChrome />
      <AppHeader />
      <div className="flex min-h-0 flex-1">
        <Sidebar />
        <div className="flex min-w-0 flex-1 gap-[21px] pr-[115px] pl-[117px]">
          <MainColumn />
          <Summary />
        </div>
        <Scrollbar />
      </div>
      <Taskbar />
      <Cursor />
    </div>
  );
}
